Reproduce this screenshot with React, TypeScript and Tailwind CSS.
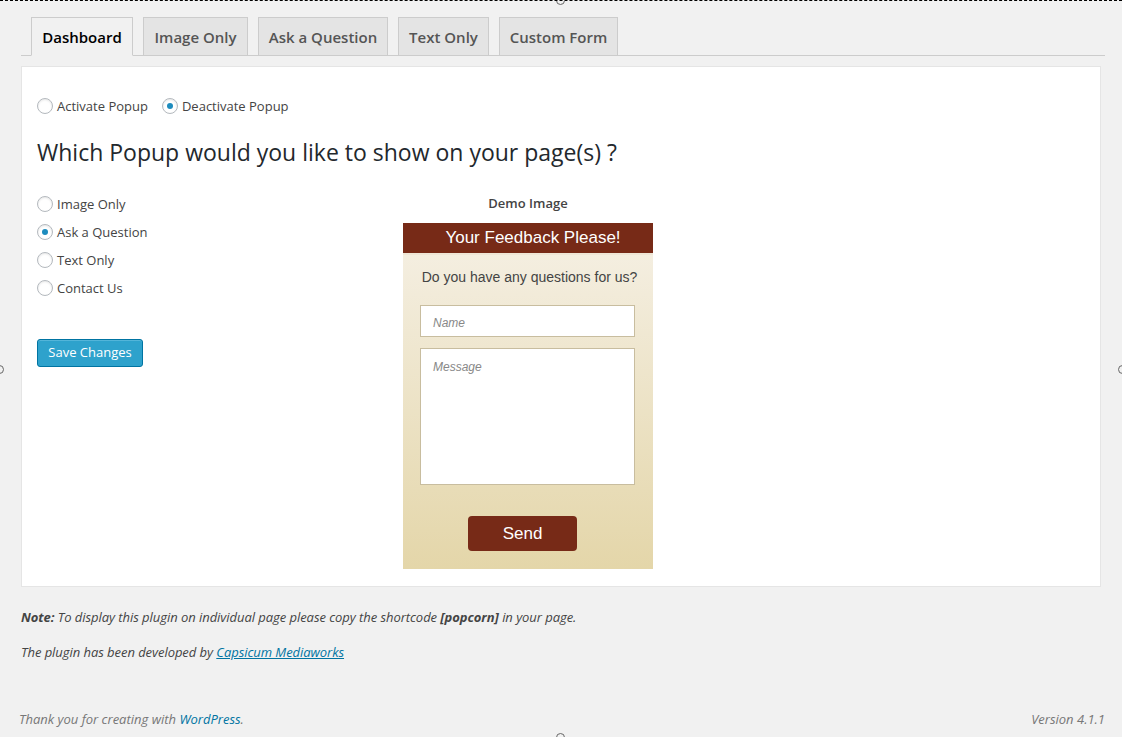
import type { FC } from 'react';

const tabs = [
  { label: 'Dashboard', w: 'w-[102px]', active: true },
  { label: 'Image Only', w: 'w-[105px]', active: false },
  { label: 'Ask a Question', w: 'w-[130px]', active: false },
  { label: 'Text Only', w: 'w-[91px]', active: false },
  { label: 'Custom Form', w: 'w-[119px]', active: false },
];

const Radio: FC<{ checked?: boolean; label: string }> = ({ checked, label }) => (
  <label className="flex items-center gap-[4px] text-[13px] text-[#444] leading-none">
    <span className="flex h-[16px] w-[16px] items-center justify-center rounded-full border border-[#b4b9be] bg-white shadow-[inset_0_1px_2px_rgba(0,0,0,0.1)]">
      {checked && <span className="h-[6px] w-[6px] rounded-full bg-[#1e8cbe]" />}
    </span>
    <span>{label}</span>
  </label>
);

const Handle: FC<{ className: string }> = ({ className }) => (
  <span className={`absolute h-[9px] w-[9px] rounded-full border border-[#666] bg-[#f1f1f1] ${className}`} />
);

const DemoImage: FC = () => (
  <div className="flex h-[346px] w-[250px] flex-col overflow-hidden font-['Liberation_Sans',Arial,sans-serif]">
    <div className="flex h-[32px] shrink-0 items-center justify-center border-b-2 border-[#efe6d6] bg-[#772a17] pl-[10px] text-[17px] text-white">
      Your Feedback Please!
    </div>
    <div className="flex flex-1 flex-col bg-gradient-to-b from-[#f4eee0] to-[#e4d6a9] px-[17px]">
      <p className="mt-[12px] self-center whitespace-nowrap pl-[3px] text-[14px] text-[#444]">
        Do you have any questions for us?
      </p>
      <div className="mt-[17px] h-[32px] w-[215px] border border-[#c8bd9f] bg-white px-[12px] pt-[8px] text-[12px] italic text-[#888]">
        Name
      </div>
      <div className="mt-[11px] h-[137px] w-[215px] border border-[#c8bd9f] bg-white px-[12px] pt-[9px] text-[12px] italic text-[#888]">
        Message
      </div>
      <button className="ml-[48px] mt-[31px] h-[35px] w-[109px] rounded-[4px] bg-[#772a17] text-[17px] text-white">
        Send
      </button>
    </div>
  </div>
);

const App: FC = () => {
  return (
    <div className="relative h-[737px] w-[1122px] overflow-hidden border-t border-dashed border-black bg-[#f1f1f1] font-['Open_Sans','Noto_Sans',sans-serif]">
      <Handle className="left-[556px] top-[-5px]" />
      <Handle className="left-[-5px] top-[364px]" />
      <Handle className="right-[-5px] top-[364px]" />
      <Handle className="left-[556px] bottom-[-5px]" />

      <div className="px-[21px] pt-[16px]">
        <nav className="flex w-[1084px] gap-[10px] border-b border-[#ccc] pl-[10px]">
          {tabs.map((t) => (
            <div
              key={t.label}
              className={`-mb-px flex h-[39px] ${t.w} items-center justify-center border border-[#ccc] pt-[2px] text-[15px] font-semibold ${
                t.active ? 'border-b-[#f1f1f1] bg-[#f1f1f1] text-[#000]' : 'bg-[#e4e4e4] text-[#555]'
              }`}
            >
              {t.label}
            </div>
          ))}
        </nav>

        <section className="mt-[10px] h-[521px] w-[1080px] border border-[#e5e5e5] bg-white px-[15px] pt-[31px]">
          <div className="flex gap-[14px]">
            <Radio label="Activate Popup" />
            <Radio checked label="Deactivate Popup" />
          </div>
          <h2 className="mt-[23px] text-[23px] leading-[30px] text-[#23282d]">
            Which Popup would you like to show on your page(s) ?
          </h2>
          <div className="mt-[23px] flex">
            <div className="w-[366px]">
              <div className="flex flex-col gap-[12px] pt-[6px]">
                <Radio label="Image Only" />
                <Radio checked label="Ask a Question" />
                <Radio label="Text Only" />
                <Radio label="Contact Us" />
              </div>
              <button className="mt-[43px] h-[28px] w-[106px] rounded-[3px] border border-[#0074a2] bg-[#2ea2cc] text-[13px] text-white shadow-[inset_0_1px_0_rgba(120,200,230,0.5)]">
                Save Changes
              </button>
            </div>
            <div className="flex flex-col items-center">
              <p className="h-[33px] pt-[4px] text-[13px] font-semibold text-[#444]">Demo Image</p>
              <DemoImage />
            </div>
          </div>
        </section>

        <div className="pt-[20px] text-[13px] italic tracking-[-0.05px] text-[#444]">
          <p className="leading-[20px]">
            <b>Note:</b> To display this plugin on individual page please copy the shortcode <b>[popcorn]</b> in your page.
          </p>
          <p className="mt-[15px] leading-[20px]">
            The plugin has been developed by{' '}
            <a className="text-[#0074a2] underline">Capsicum Mediaworks</a>
          </p>
        </div>
      </div>

      <footer className="mt-[48px] flex justify-between pl-[19px] pr-[17px] text-[13px] italic text-[#777]">
        <span>
          Thank you for creating with <a className="text-[#0074a2]">WordPress</a>.
        </span>
        <span>Version 4.1.1</span>
      </footer>
    </div>
  );
};

export default App;
